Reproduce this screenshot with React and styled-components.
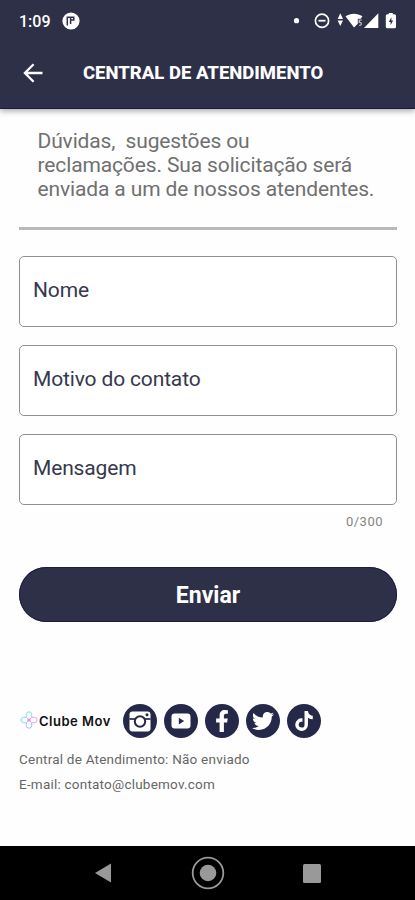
import React, { useState } from 'react';
import styled, { createGlobalStyle } from 'styled-components';
import { FaFacebookF, FaTwitter, FaTiktok } from 'react-icons/fa';

const GlobalStyle = createGlobalStyle`
  * {
    box-sizing: border-box;
  }
  body {
    margin: 0;
    background-color: #fefefe;
    font-family: Roboto, "Liberation Sans", sans-serif;
  }
`;

const Screen = styled.div`
  width: 415px;
  height: 900px;
  display: flex;
  flex-direction: column;
  overflow: hidden;
`;

const Header = styled.header`
  height: 109px;
  flex-shrink: 0;
  background-color: #2e3047;
  border-bottom: 1px solid #171a42;
  box-shadow: 0 2px 6px rgba(0, 0, 0, 0.35);
  color: #fff;
`;

const StatusBar = styled.div`
  height: 41px;
  padding: 0 18px 0 19px;
  display: flex;
  align-items: center;
  justify-content: space-between;
`;

const StatusGroup = styled.div`
  display: flex;
  align-items: center;
`;

const Clock = styled.span`
  width: 43px;
  font-size: 16px;
  font-weight: 500;
  line-height: 20px;
  padding-top: 2px;
`;

const TitleBar = styled.div`
  height: 64px;
  padding-left: 20px;
  display: flex;
  align-items: center;
`;

const BackButton = styled.button`
  width: 26px;
  height: 26px;
  margin-right: 37px;
  padding: 0;
  border: none;
  background: none;
  color: #fff;
  cursor: pointer;
`;

const Title = styled.h1`
  margin: 0;
  font-size: 18.5px;
  font-weight: 800;
  line-height: 22px;
  letter-spacing: 0;
`;

const Content = styled.main`
  flex: 1;
  padding: 20px 18px 0 19px;
`;

const Description = styled.p`
  height: 101px;
  margin: 0;
  padding: 0 0 0 18.5px;
  border-bottom: 3px solid #b9b9b9;
  color: #707070;
  font-size: 21px;
  font-weight: 400;
  line-height: 24.2px;
  letter-spacing: -0.13px;
  white-space: pre-line;
`;

const Form = styled.form`
  padding-top: 26px;
  display: flex;
  flex-direction: column;
`;

const Field = styled.input`
  width: 100%;
  height: 71px;
  margin-bottom: 18px;
  padding: 0 13px 4px;
  border: 1.5px solid #909090;
  border-radius: 5px;
  outline: none;
  background-color: #fff;
  color: #2e3047;
  font-family: inherit;
  font-size: 21px;
  letter-spacing: -0.15px;
  &::placeholder {
    color: #36384e;
    opacity: 1;
  }
`;

const Counter = styled.span`
  height: 16px;
  margin: -9px 14px 37px 0;
  color: #858585;
  font-size: 13px;
  line-height: 16px;
  letter-spacing: 0.5px;
  text-align: right;
`;

const SendButton = styled.button`
  height: 55px;
  padding: 2px 0 0;
  border: none;
  border-radius: 28px;
  background-color: #2e3047;
  box-shadow: inset 0 0 0 1px #1b1d43;
  color: #fff;
  font-family: inherit;
  font-size: 23px;
  font-weight: 700;
  cursor: pointer;
`;

const Footer = styled.footer`
  padding-top: 82px;
`;

const SocialRow = styled.div`
  height: 34px;
  display: flex;
  align-items: center;
  gap: 7px;
`;

const Brand = styled.div`
  width: 97px;
  display: flex;
  align-items: center;
  color: #111;
  font-family: Inter, sans-serif;
  font-size: 13px;
  font-weight: 560;
  letter-spacing: 0.5px;
  white-space: nowrap;
  svg {
    margin: 0 1px 2px 1px;
  }
`;

const SocialButton = styled.a`
  width: 34px;
  height: 34px;
  flex-shrink: 0;
  border-radius: 50%;
  background-color: #26284a;
  color: #fff;
  display: flex;
  align-items: center;
  justify-content: center;
`;

const ContactLine = styled.p`
  margin: 0;
  color: #666;
  font-size: 13.5px;
  font-weight: 430;
  line-height: 25px;
  letter-spacing: 0.22px;
  &:first-of-type {
    margin-top: 9px;
  }
`;

const NavBar = styled.nav`
  height: 54px;
  flex-shrink: 0;
  padding: 0 94px;
  background-color: #000;
  display: flex;
  align-items: center;
  justify-content: space-between;
`;

const NotificationIcon = () => (
  <svg width="18" height="18" viewBox="0 0 18 18">
    <circle cx="9" cy="9" r="8.6" fill="#fff" />
    <path
      d="M5.3 13.6V5.2h3.2M8.6 12V5.3h3.2v2.8H9"
      fill="none"
      stroke="#2e3047"
      strokeWidth="1.5"
    />
  </svg>
);

const StatusIcons = () => (
  <svg width="104" height="18" viewBox="293 12 104 18" fill="#fff">
    <circle cx="296.5" cy="20.7" r="2.6" />
    <circle cx="322" cy="20.7" r="6.6" fill="none" stroke="#fff" strokeWidth="1.7" />
    <path d="M318.5 19.8h7v1.8h-7z" />
    <path d="M340.3 13.3l2.7 5.6h-5.4zM340.3 26l2.7-5.6h-5.4z" />
    <path d="M345.5 16.2c5.2-3.4 11.8-3.4 17 0l-1.8 2.6h-2.9v5l-3.8 3.7z" />
    <path d="M361.8 20h-2.6v2.5c2.8-.6 3 3 0 2.8" fill="none" stroke="#c2c2cb" strokeWidth="1.2" />
    <path d="M378.3 13.3v14.8H364z" />
    <path d="M388.8 14.3V13h4v1.3h1.7q1.5 0 1.5 1.5v11q0 1.5-1.5 1.5h-7.2q-1.5 0-1.5-1.5v-11q0-1.5 1.5-1.5z" />
    <path d="M391.4 17.2l-2.6 4.7h1.8v3.4l2.5-4.7h-1.7z" fill="#2e3047" />
  </svg>
);

const BackArrow = () => (
  <svg width="26" height="26" viewBox="0 0 26 26" fill="none" stroke="#fff" strokeWidth="2.3">
    <path d="M22.5 13H5M13.6 4.3L4.9 13l8.7 8.7" />
  </svg>
);

const BrandMark = () => (
  <svg width="18" height="20" viewBox="0 0 18 20" fill="none" strokeWidth="1">
    <path d="M6.3 7.4V4.5a2.7 2.7 0 0 1 5.4 0v2.9" stroke="#8fdcf8" />
    <path d="M6.3 12.6v2.9a2.7 2.7 0 0 0 5.4 0v-2.9" stroke="#a4b9fb" />
    <path d="M6.5 7.3H3.6a2.7 2.7 0 0 0 0 5.4h2.9" stroke="#7bd9fa" />
    <path d="M11.5 7.3h2.9a2.7 2.7 0 0 1 0 5.4h-2.9" stroke="#d8a5f8" />
    <path d="M6.5 7.5l5 5M11.5 7.5l-5 5" stroke="#e5a4f4" />
    <circle cx="9" cy="10" r="1.6" fill="#d58bf0" />
  </svg>
);

const InstagramIcon = () => (
  <svg width="34" height="34" viewBox="0 0 34 34">
    <path d="M9.5 7.5h15q3 0 3 3v14q0 3-3 3h-15q-3 0-3-3v-14q0-3 3-3z" fill="#fff" />
    <path d="M6.5 15h21" stroke="#26284a" strokeWidth="1.7" />
    <circle cx="17" cy="17.5" r="5.2" fill="#fff" stroke="#26284a" strokeWidth="2" />
    <circle cx="24" cy="10.8" r="1.5" fill="#26284a" />
  </svg>
);

const YoutubeIcon = () => (
  <svg width="34" height="34" viewBox="0 0 34 34">
    <rect x="7.5" y="9.5" width="19" height="15" rx="3.2" fill="#fff" />
    <path d="M14.8 13.7v6.8l5.4-3.4z" fill="#26284a" />
  </svg>
);

const socials = [
  { id: 'instagram', icon: <InstagramIcon /> },
  { id: 'youtube', icon: <YoutubeIcon /> },
  { id: 'facebook', icon: <FaFacebookF size={22} /> },
  { id: 'twitter', icon: <FaTwitter size={22} /> },
  { id: 'tiktok', icon: <FaTiktok size={20} /> },
];

const App = () => {
  const [name, setName] = useState('');
  const [reason, setReason] = useState('');
  const [message, setMessage] = useState('');

  const handleSubmit = (event) => {
    event.preventDefault();
  };

  return (
    <Screen>
      <GlobalStyle />
      <Header>
        <StatusBar>
          <StatusGroup>
            <Clock>1:09</Clock>
            <NotificationIcon />
          </StatusGroup>
          <StatusIcons />
        </StatusBar>
        <TitleBar>
          <BackButton aria-label="Voltar">
            <BackArrow />
          </BackButton>
          <Title>CENTRAL DE ATENDIMENTO</Title>
        </TitleBar>
      </Header>
      <Content>
        <Description>
          {'Dúvidas, \u00a0sugestões ou\nreclamações. Sua solicitação será\nenviada a um de nossos atendentes.'}
        </Description>
        <Form onSubmit={handleSubmit}>
          <Field placeholder="Nome" value={name} onChange={(e) => setName(e.target.value)} />
          <Field
            placeholder="Motivo do contato"
            value={reason}
            onChange={(e) => setReason(e.target.value)}
          />
          <Field
            placeholder="Mensagem"
            maxLength={300}
            value={message}
            onChange={(e) => setMessage(e.target.value)}
          />
          <Counter>{`${message.length}/300`}</Counter>
          <SendButton type="submit">Enviar</SendButton>
        </Form>
        <Footer>
          <SocialRow>
            <Brand>
              <BrandMark />
              Clube Mov
            </Brand>
            {socials.map((social) => (
              <SocialButton key={social.id} aria-label={social.id}>
                {social.icon}
              </SocialButton>
            ))}
          </SocialRow>
          <ContactLine>Central de Atendimento: Não enviado</ContactLine>
          <ContactLine>E-mail: contato@clubemov.com</ContactLine>
        </Footer>
      </Content>
      <NavBar>
        <svg width="18" height="20" viewBox="0 0 18 20">
          <path d="M1 10L17 .6v18.8z" fill="#999" />
        </svg>
        <svg width="34" height="34" viewBox="0 0 34 34">
          <circle cx="17" cy="17" r="15.3" fill="none" stroke="#999" strokeWidth="1.8" />
          <circle cx="17" cy="17" r="8.3" fill="#999" />
        </svg>
        <svg width="18" height="19" viewBox="0 0 18 19">
          <rect width="18" height="19" rx="1.5" fill="#999" />
        </svg>
      </NavBar>
    </Screen>
  );
};

export default App;
